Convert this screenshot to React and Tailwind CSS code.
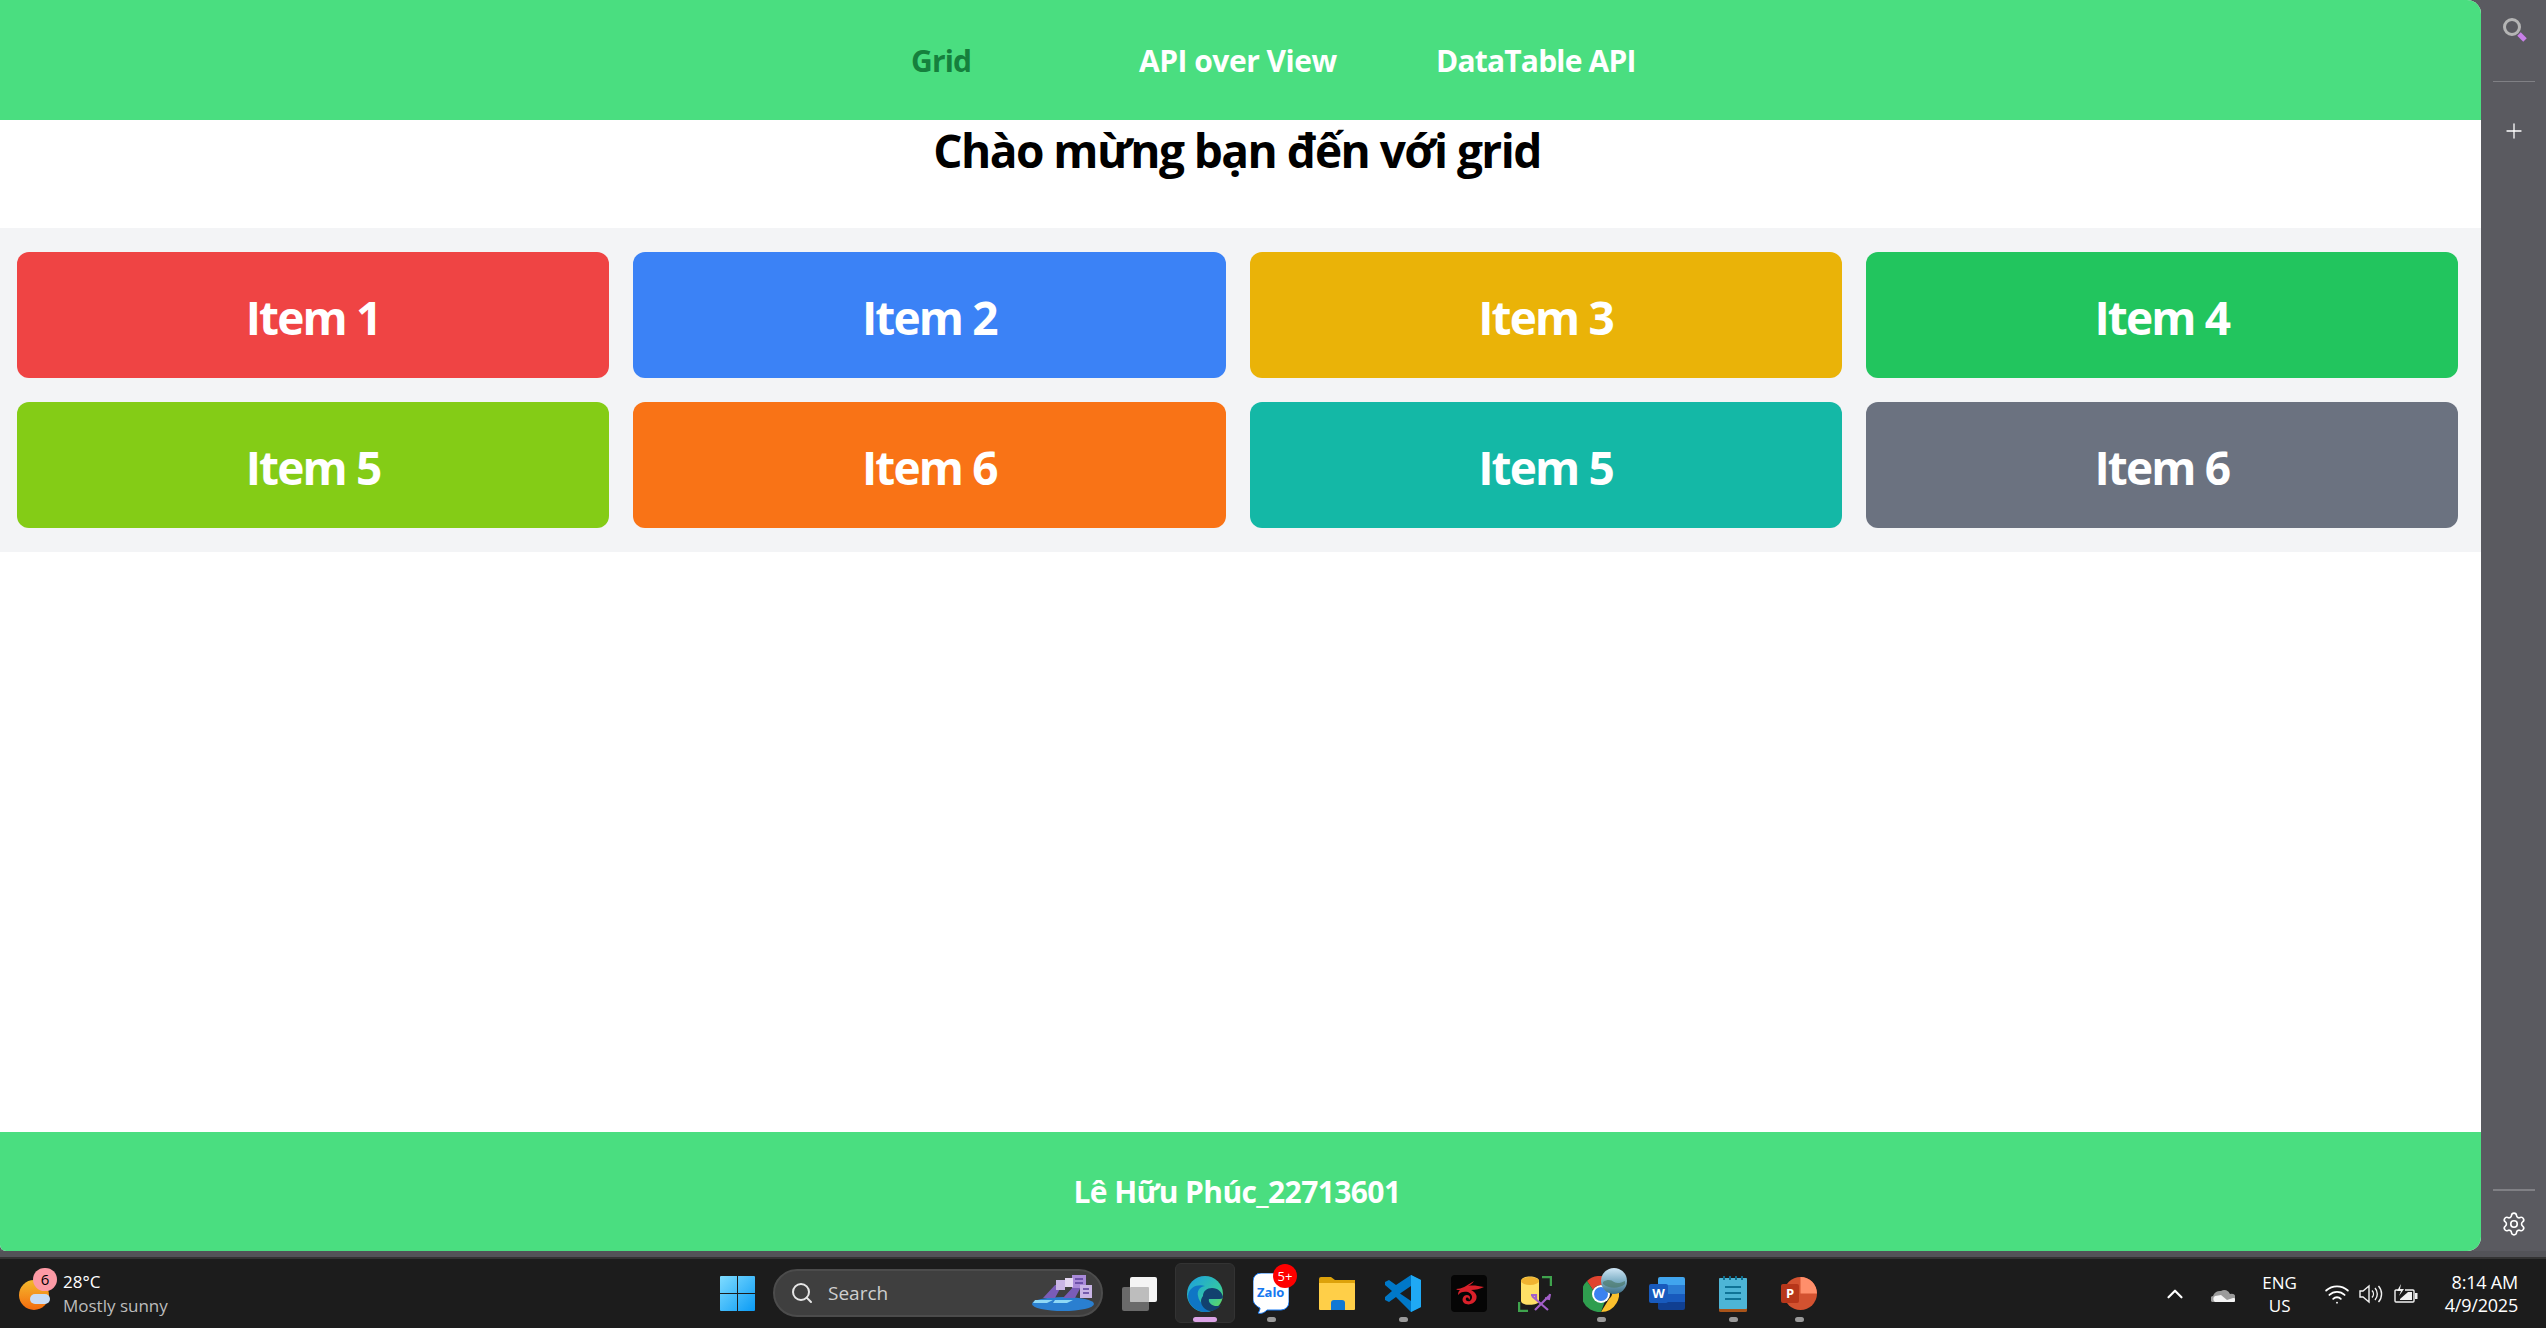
import React from "react";
import { Settings, Plus, ChevronUp, Wifi, Search } from "lucide-react";

const items = [
  { label: "Item 1", color: "bg-[#ef4444]" },
  { label: "Item 2", color: "bg-[#3b82f6]" },
  { label: "Item 3", color: "bg-[#eab308]" },
  { label: "Item 4", color: "bg-[#22c55e]" },
  { label: "Item 5", color: "bg-[#84cc16]" },
  { label: "Item 6", color: "bg-[#f97316]" },
  { label: "Item 5", color: "bg-[#14b8a6]" },
  { label: "Item 6", color: "bg-[#6b7280]" },
];

function WindowsIcon() {
  return (
    <svg width="35" height="35" viewBox="0 0 35 35">
      <defs>
        <linearGradient id="win" x1="0" y1="0" x2="1" y2="1">
          <stop offset="0" stopColor="#7fdcff" />
          <stop offset="1" stopColor="#0a9bf5" />
        </linearGradient>
      </defs>
      <path d="M1 0h16v17H0V1a1 1 0 0 1 1-1zM18 0h16a1 1 0 0 1 1 1v16H18zM0 18h17v17H1a1 1 0 0 1-1-1zM18 18h17v16a1 1 0 0 1-1 1H18z" fill="url(#win)" />
    </svg>
  );
}

function TaskViewIcon() {
  return (
    <svg width="36" height="36" viewBox="0 0 36 36">
      <rect x="1" y="11" width="27" height="24" rx="2" fill="#6a6a6a" />
      <rect x="9" y="1" width="27" height="25" rx="2" fill="#f4f4f4" />
      <rect x="9" y="11" width="19" height="15" rx="1" fill="#bdbdbd" />
    </svg>
  );
}

function EdgeIcon() {
  return (
    <svg width="36" height="36" viewBox="0 0 36 36">
      <defs>
        <linearGradient id="edgeTop" x1="0" y1="0" x2="1" y2="1">
          <stop offset="0" stopColor="#1b9de2" />
          <stop offset="0.6" stopColor="#33c6a6" />
          <stop offset="1" stopColor="#6fdc4d" />
        </linearGradient>
      </defs>
      <circle cx="18" cy="18" r="18" fill="url(#edgeTop)" />
      <path d="M1 20C2 10 12 8 18 10c-6 1-8 5-7 10 1 7 8 12 15 12 2 0 4-1 6-2-4 4-9 6-14 6C9 36 1 29 1 20z" fill="#0f76c5" />
      <path d="M16 20c0-5 4-8 9-8 6 0 10 4 11 9 0 1-1 2-3 2H22c-1 3 2 6 6 7 2 0 4 0 6-1-3 4-7 6-11 6-5-1-9-5-9-10 0-2 1-4 2-5z" fill="#12416f" />
    </svg>
  );
}

function ZaloIcon() {
  return (
    <div className="relative w-[36px] h-[42px]">
      <svg width="36" height="42" viewBox="0 0 36 42" className="absolute left-0 top-0">
        <path d="M8 0h20a8 8 0 0 1 8 8v21a8 8 0 0 1-8 8H14c-3 3-6 4-9 3 1-1 2-3 2-5-4-2-7-5-7-9V8a8 8 0 0 1 8-8z" fill="#fff" stroke="#1678f0" strokeWidth="1" />
      </svg>
      <span className="absolute left-[4px] top-[12px] text-[13px] leading-[14px] font-bold text-[#1678f0] font-['Open_Sans',sans-serif]">Zalo</span>
      <span className="absolute -right-[8px] -top-[9px] w-[24px] h-[24px] rounded-full bg-[#f00] text-white text-[13px] leading-[24px] text-center font-['Open_Sans',sans-serif]">5+</span>
    </div>
  );
}

function FolderIcon() {
  return (
    <svg width="36" height="33" viewBox="0 0 36 33">
      <path d="M0 2a2 2 0 0 1 2-2h10l4 3h20v8H0z" fill="#dda20b" />
      <path d="M0 6h35a1 1 0 0 1 1 1v25a1 1 0 0 1-1 1H1a1 1 0 0 1-1-1z" fill="#ffcf48" />
      <path d="M12 26a3 3 0 0 1 3-3h8a3 3 0 0 1 3 3v7H12z" fill="#0f78d4" />
    </svg>
  );
}

function VsCodeIcon() {
  return (
    <svg width="36" height="37" viewBox="0 0 36 37">
      <path d="M26 0l10 5v27l-10 5-15-15-7 5-4-2v-3l7-6-7-6v-3l4-2 7 5z" fill="#0078c8" />
      <path d="M26 0l10 5v27l-10 5z" fill="#1fa9f4" />
      <path d="M26 11L15 18.500 26 26z" fill="#1c1c1c" />
    </svg>
  );
}

function GarenaIcon() {
  return (
    <svg width="36" height="37" viewBox="0 0 36 37">
      <rect width="36" height="37" rx="4" fill="#050505" />
      <path d="M5 14c6 0 10-3 18-8-2 3-4 4-6 5 5-1 10 0 16 1-4 2-8 3-13 3 4 2 7 5 5 10-2 4-8 6-12 3-3-3-1-8 3-8 3 0 4 3 2 5 0-2-1-3-3-2-1 2 1 4 4 3 3-2 3-7-2-9-4-1-8 0-10 3 0-3 1-4 2-5-2 0-3 0-4-1z" fill="#d8202a" />
    </svg>
  );
}

function DbToolIcon() {
  return (
    <svg width="34" height="36" viewBox="0 0 34 36">
      <path d="M3 5c0-6 18-6 18 0v20c0 5-18 5-18 0z" fill="#ffe066" />
      <ellipse cx="12" cy="5" rx="9" ry="4" fill="#f0b330" />
      <path d="M24 1h9v9M1 26v9h9" fill="none" stroke="#3fa34d" strokeWidth="2.500" />
      <path d="M14 20l16 14M31 20L17 34M13 19l5 0 0 5M32 18l-1 5-4-1" fill="none" stroke="#a35fc9" strokeWidth="2.200" />
    </svg>
  );
}

function ChromeIcon() {
  return (
    <div className="relative w-[36px] h-[36px]">
      <svg width="36" height="36" viewBox="0 0 36 36" className="absolute left-0 top-0">
        <path d="M18 0a18 18 0 0 1 15.600 9H18a9 9 0 0 0-8 5L4 5a18 18 0 0 1 14-5z" fill="#e0442f" />
        <path d="M33.600 9A18 18 0 0 1 18 36l8-13a9 9 0 0 0 0-14z" fill="#fbc02d" />
        <path d="M18 36A18 18 0 0 1 4 5l6 9a9 9 0 0 0 12 11z" fill="#2f9e4f" />
        <circle cx="18" cy="18" r="9" fill="#fff" />
        <circle cx="18" cy="18" r="7" fill="#3b82f0" />
      </svg>
      <svg width="26" height="26" viewBox="0 0 26 26" className="absolute left-[18px] -top-[8px]">
        <defs>
          <linearGradient id="globe" x1="0" y1="0" x2="0" y2="1">
            <stop offset="0" stopColor="#cfe6f5" />
            <stop offset="0.5" stopColor="#7fb0c6" />
            <stop offset="1" stopColor="#3f6f86" />
          </linearGradient>
        </defs>
        <circle cx="13" cy="13" r="13" fill="url(#globe)" />
        <path d="M2 14c5-3 8-2 11 0s7 1 11-1v3c-6 5-16 5-22 0z" fill="#4d7a6c" opacity="0.7" />
      </svg>
    </div>
  );
}

function WordIcon() {
  return (
    <div className="relative w-[36px] h-[33px]">
      <div className="absolute right-0 top-0 w-[27px] h-[33px] rounded-[2px] overflow-hidden flex flex-col">
        <div className="h-[8px] bg-[#41a5ee]" />
        <div className="h-[9px] bg-[#2b7cd3]" />
        <div className="h-[8px] bg-[#185abd]" />
        <div className="h-[8px] bg-[#103f91]" />
      </div>
      <span className="absolute left-0 top-[7px] w-[19px] h-[19px] rounded-[2px] bg-[#185abd] text-white text-[13px] leading-[19px] font-bold text-center font-['Open_Sans',sans-serif]">W</span>
    </div>
  );
}

function NotepadIcon() {
  return (
    <svg width="28" height="36" viewBox="0 0 28 36">
      <rect y="2" width="28" height="34" rx="1.500" fill="#a9541a" />
      <rect y="2" width="28" height="31" rx="1" fill="#4db5d6" />
      <path d="M5 0v4M11 0v4M17 0v4M23 0v4" stroke="#0f6f8f" strokeWidth="2" />
      <path d="M6 11h16M6 17h16M6 23h16" stroke="#0f7396" strokeWidth="2" />
    </svg>
  );
}

function PowerPointIcon() {
  return (
    <div className="relative w-[36px] h-[33px]">
      <svg width="36" height="33" viewBox="0 0 36 33" className="absolute left-0 top-0">
        <circle cx="19.500" cy="16.500" r="16.500" fill="#d35230" />
        <path d="M19.500 0a16.500 16.500 0 0 1 16.500 16.500H19.500z" fill="#ff8f6b" />
      </svg>
      <span className="absolute left-0 top-[7px] w-[18px] h-[19px] rounded-[2px] bg-[#b7361a] text-white text-[13px] leading-[19px] font-bold text-center font-['Open_Sans',sans-serif]">P</span>
    </div>
  );
}

function SearchArt() {
  return (
    <svg width="64" height="38" viewBox="0 0 64 38">
      <ellipse cx="32" cy="30" rx="31" ry="7" fill="#2a7fd0" />
      <path d="M4 26h18l-6 3H2zM24 26h18l-6 3H22z" fill="#8fd8f5" />
      <path d="M12 24L24 11h7l-7 13zM32 24L44 11h7l-7 13z" fill="#7a5cb8" />
      <rect x="25" y="6" width="9" height="10" fill="#c9b5e6" />
      <rect x="41" y="1" width="14" height="13" fill="#a98ad9" />
      <rect x="49" y="11" width="12" height="13" fill="#c9b5e6" />
      <rect x="34" y="4" width="8" height="9" fill="#e3d6f2" />
      <path d="M44 5h8M44 9h8M52 15h6M52 19h6" stroke="#5a3f9a" strokeWidth="1.500" />
    </svg>
  );
}

function OneDriveIcon() {
  return (
    <svg width="24" height="16" viewBox="0 0 24 16">
      <path d="M3 16a3 3 0 0 1-1-6 7 7 0 0 1 8-5 6 6 0 0 1 9 3 4 4 0 0 1 3 8z" fill="#9a9a9a" />
      <path d="M4 16a3.500 3.500 0 0 1 0-6l6-1 6 5 6-2a2 2 0 0 1 1 4z" fill="#f4f4f4" />
    </svg>
  );
}

function VolumeIcon() {
  return (
    <svg width="24" height="20" viewBox="0 0 24 20" fill="none" stroke="#f2f2f2" strokeWidth="1.400">
      <path d="M1 7h3l6-5v16l-6-5H1z" />
      <path d="M13 6.500a5 5 0 0 1 0 7M16 4a9 9 0 0 1 0 12M19.500 2a12 12 0 0 1 0 16" />
    </svg>
  );
}

function BatteryIcon() {
  return (
    <svg width="25" height="20" viewBox="0 0 25 20" fill="none">
      <path d="M5 6H2a1 1 0 0 0-1 1v10a1 1 0 0 0 1 1h17a1 1 0 0 0 1-1V7a1 1 0 0 0-1-1h-8" stroke="#f2f2f2" strokeWidth="1.400" />
      <path d="M6 15l8-7h4v8H6z" fill="#f2f2f2" />
      <path d="M21 9h2.500v6H21z" fill="#f2f2f2" />
      <path d="M7 0L3 7h4l-2 5 5-7H6z" fill="#f2f2f2" />
    </svg>
  );
}

function TaskSlot({ children, dot, active }) {
  return (
    <div className="relative w-[66px] h-[69px] flex items-center justify-center">
      {active && <div className="absolute left-[3px] top-[4px] w-[60px] h-[60px] rounded-[6px] bg-[#2a2a2a] border border-[#333333]" />}
      <div className="relative">{children}</div>
      {dot && <div className="absolute left-[29px] bottom-[6px] w-[9px] h-[5px] rounded-full bg-[#9a9a9a]" />}
      {active && <div className="absolute left-[21px] bottom-[6px] w-[24px] h-[5px] rounded-full bg-[#dba3e6]" />}
    </div>
  );
}

function Taskbar() {
  return (
    <div className="h-[69px] bg-[#1c1c1c] flex text-white font-['Open_Sans',sans-serif] text-[17px]">
      <div className="w-[704px] flex items-center pl-[19px]">
        <div className="relative w-[30px] h-[30px] mt-[2px]">
          <div className="w-[30px] h-[30px] rounded-full bg-gradient-to-b from-[#f2b92d] to-[#f26a0c]" />
          <div className="absolute left-[11px] top-[14px] w-[20px] h-[10px] rounded-full bg-[#c8dcf5]" />
          <div className="absolute left-[14px] -top-[12px] w-[24px] h-[23px] rounded-full bg-[#fd9aa5] text-black text-[15px] leading-[23px] text-center">6</div>
        </div>
        <div className="ml-[14px] leading-[24px]">
          <div className="text-[17px]">28°C</div>
          <div className="text-[#bcbcbc] text-[17px]">Mostly sunny</div>
        </div>
      </div>

      <TaskSlot><WindowsIcon /></TaskSlot>
      <div className="ml-[3px] mt-[10px] w-[330px] h-[48px] rounded-full bg-[#3f3f3f] border-2 border-[#4c4c4c] flex items-center pl-[16px] pr-[8px]">
        <Search size={24} className="text-[#e6e6e6] -ml-[1px]" strokeWidth={2} />
        <span className="ml-[14px] text-[#cfcfcf] text-[19px]">Search</span>
        <div className="ml-auto -mr-[2px]"><SearchArt /></div>
      </div>
      <div className="ml-[3px] flex">
        <TaskSlot><TaskViewIcon /></TaskSlot>
        <TaskSlot active><EdgeIcon /></TaskSlot>
        <TaskSlot dot><ZaloIcon /></TaskSlot>
        <TaskSlot><FolderIcon /></TaskSlot>
        <TaskSlot dot><VsCodeIcon /></TaskSlot>
        <TaskSlot><GarenaIcon /></TaskSlot>
        <TaskSlot><DbToolIcon /></TaskSlot>
        <TaskSlot dot><ChromeIcon /></TaskSlot>
        <TaskSlot><WordIcon /></TaskSlot>
        <TaskSlot dot><NotepadIcon /></TaskSlot>
        <TaskSlot dot><PowerPointIcon /></TaskSlot>
      </div>

      <div className="ml-auto flex items-center pr-[28px]">
        <ChevronUp size={26} strokeWidth={2} className="text-white" />
        <div className="ml-[23px]"><OneDriveIcon /></div>
        <div className="ml-[21px] w-[48px] text-center leading-[23px] text-[17px]">
          <div>ENG</div>
          <div>US</div>
        </div>
        <Wifi size={26} strokeWidth={1.700} className="ml-[20px] text-white" />
        <div className="ml-[9px]"><VolumeIcon /></div>
        <div className="ml-[11px]"><BatteryIcon /></div>
        <div className="ml-[26px] text-right leading-[23px] text-[18px] tracking-[-0.200px]">
          <div>8:14 AM</div>
          <div>4/9/2025</div>
        </div>
      </div>
    </div>
  );
}

export default function App() {
  return (
    <div className="w-[2546px] h-[1328px] overflow-hidden flex flex-col bg-[#5a5a60] font-['Open_Sans',sans-serif]">
      <div className="h-[1251px] flex">
        <div className="w-[2481px] h-full rounded-r-[14px] rounded-bl-[6px] overflow-hidden bg-white flex flex-col">
          <header className="h-[120px] shrink-0 bg-[#4ade80] flex justify-center pl-[63px] pt-[40px] text-[30px] leading-[42px] font-bold tracking-[-0.800px] text-white whitespace-nowrap">
            <a className="w-[128px] text-[#15803d]">Grid</a>
            <a className="ml-[100px] w-[197px] tracking-[-0.500px]">API over View</a>
            <a className="ml-[100px] w-[197px]">DataTable API</a>
          </header>

          <main className="flex-1 flex flex-col">
            <h1 className="h-[108px] shrink-0 pr-[7px] text-center text-[46px] leading-[60px] font-bold tracking-[-1.550px] text-black">
              Chào mừng bạn đến với grid
            </h1>
            <div className="bg-[#f3f4f6] pl-[17px] pr-[23px] py-[24px] grid grid-cols-4 gap-[24px]">
              {items.map((item, i) => (
                <div key={i} className={`h-[126px] pt-[5px] rounded-[12px] flex items-center justify-center text-white text-[46px] font-bold tracking-[-1.800px] ${item.color}`}>
                  {item.label}
                </div>
              ))}
            </div>
          </main>

          <footer className="h-[119px] shrink-0 bg-[#4ade80] flex items-center justify-center pr-[7px] text-white text-[30px] font-bold tracking-[-0.600px]">
            Lê Hữu Phúc_22713601
          </footer>
        </div>

        <aside className="flex-1 relative flex flex-col items-center">
          <svg width="28" height="28" viewBox="0 0 28 28" className="mt-[17px] ml-[4px]">
            <circle cx="10" cy="10" r="7.500" fill="none" stroke="#b5b5b5" strokeWidth="3" />
            <path d="M17 17l6 6" stroke="#c77fe8" strokeWidth="5" />
          </svg>
          <div className="mt-[36px] w-[42px] h-[1px] bg-[#808085]" />
          <Plus size={24} strokeWidth={1.300} className="mt-[37px] text-white" />
          <div className="mt-auto w-[42px] h-[2px] bg-[#808085]" />
          <Settings size={26} strokeWidth={1.500} className="mt-[20px] mb-[14px] text-white" />
        </aside>
      </div>
      <div className="h-[8px] shrink-0 bg-[#535358] border-b-2 border-[#333333]" />
      <Taskbar />
    </div>
  );
}
